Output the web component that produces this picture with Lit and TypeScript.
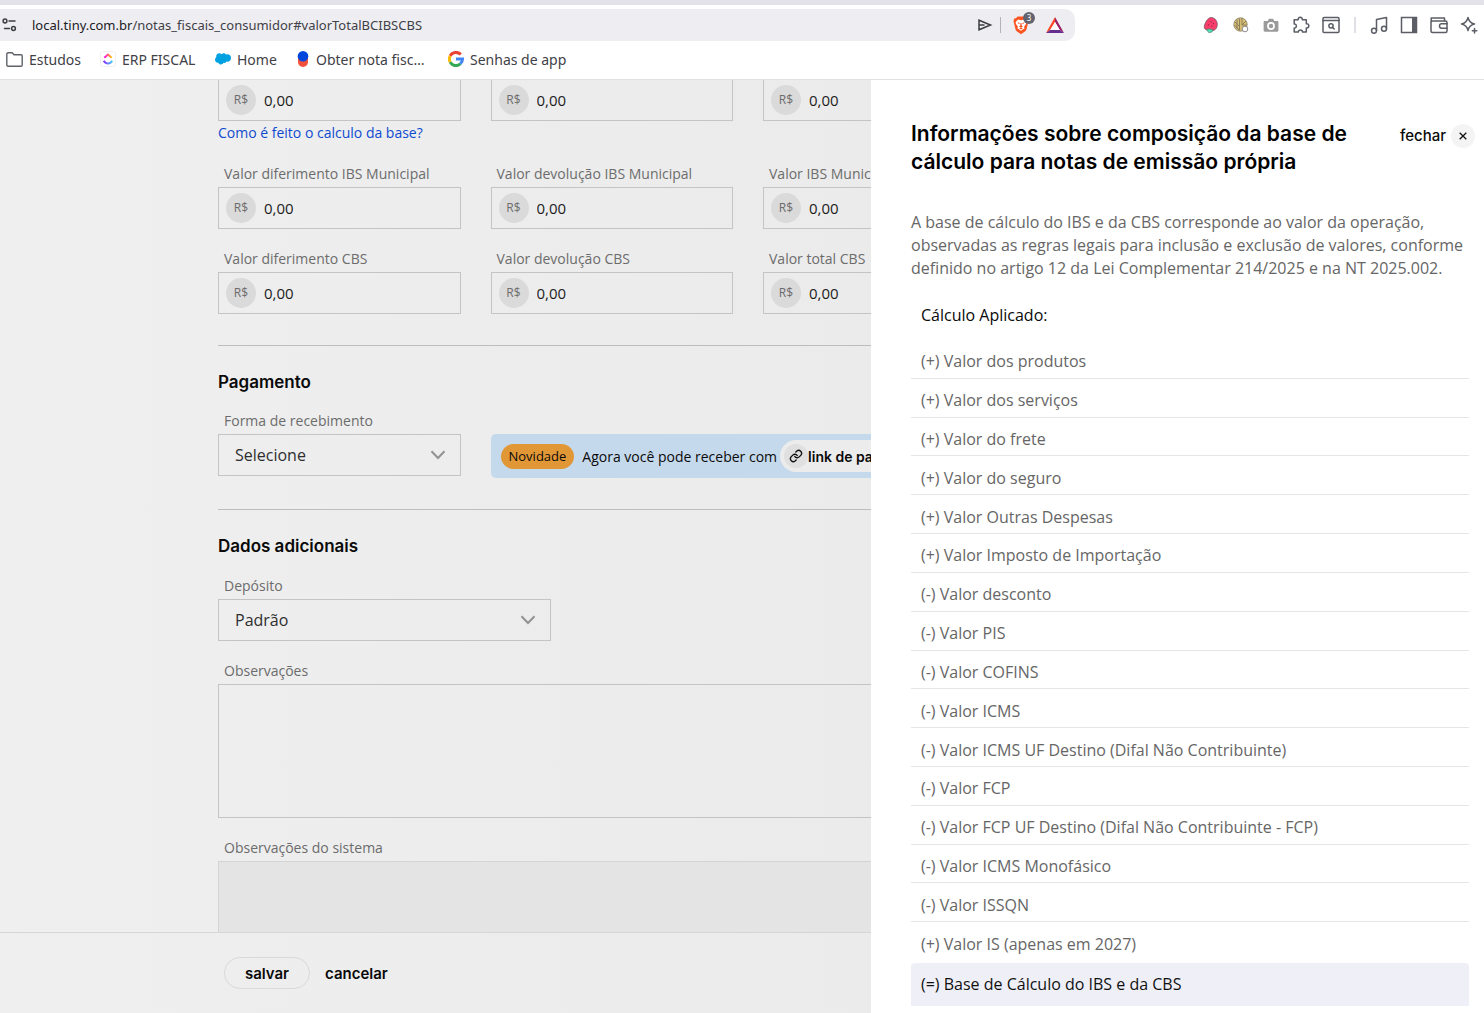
import { LitElement, html, css, svg, nothing, TemplateResult } from "lit";
import { customElement, property } from "lit/decorators.js";

const reset = css`
  *, *::before, *::after { box-sizing: border-box; }
  h1, h2, h3, p, ul { margin: 0; padding: 0; }
  ul { list-style: none; }
  button, input, select, textarea { font: inherit; color: inherit; margin: 0; }
  button { border: 0; background: none; padding: 0; cursor: pointer; }
  a { color: inherit; text-decoration: none; }
  svg { display: block; flex: none; }
`;

/* ---------- icons ---------- */

const line = (size: number, body: TemplateResult, cls = "") =>
  html`<svg class=${cls} width=${size} height=${size} viewBox="0 0 18 18" fill="none" stroke="#5b5e66" stroke-width="1.5" stroke-linejoin="round" stroke-linecap="round" aria-hidden="true">${body}</svg>`;

const icons = {
  tune: line(18, svg`<g stroke="#3d3f45"><circle cx="5" cy="5" r="1.900"/><path d="M9 5h6M4.500 12.500h5"/><circle cx="13.500" cy="12.500" r="1.900"/></g>`),
  send: line(18, svg`<path stroke="#3d3f45" stroke-linejoin="miter" d="M4 4.200v9.600L15.500 9zM4 9h5"/>`),
  brave: html`<svg width="18" height="20" viewBox="0 0 18 20" aria-hidden="true">
    <path fill="#fb5422" d="M5.500 1.500h7l1.500 1.700 1.800.2.700 2.800-.4 1.600-1.500 6.200c-.3 1.200-.8 1.900-1.700 2.600L9 19.300l-3.900-2.700c-.9-.7-1.400-1.400-1.700-2.600L1.900 7.800l-.4-1.600.7-2.800 1.800-.2z"/>
    <path fill="#fff" d="M6 4.500l3 .7 3-.7 2.500 2.700-.8 2.300-1.700 2.200.6 1.600L9 15.800l-3.600-2.500.6-1.600-1.700-2.200-.8-2.300z"/>
    <path fill="#fb5422" d="M5.300 7.300l2.500.6-.7 1.300zM12.700 7.300l-2.500.6.700 1.300zM8.500 8h1l.3 2.800 1.200.8-2 1-2-1 1.200-.8zM7.200 13.300L9 12.600l1.800.7L9 14.600z"/></svg>`,
  bat: html`<svg width="18" height="16" viewBox="0 0 18 16" aria-hidden="true">
    <path fill="#ff4724" d="M9 0v5L4.200 13 0 16z"/><path fill="#9e1f63" d="M9 0l9 16-4.200-3L9 5z"/><path fill="#662d91" d="M0 16l4.200-3h9.600l4.200 3z"/><path fill="#fff" d="M9 5l4.800 8H4.200z"/></svg>`,
  strawberry: html`<svg width="18" height="18" viewBox="0 0 18 18" aria-hidden="true">
    <path fill="#fb3d6c" stroke="#6b5560" stroke-width=".8" d="M9.500 1.500c3 .3 5.800 3 5.800 6.800 0 3.500-1.800 5.600-4 6.200l-6-.5c-2.300-.4-3.400-1.800-3-3.700C2.800 7.500 5.500 1.300 9.500 1.500z"/>
    <path fill="#4fe0b5" stroke="#4f7d72" stroke-width=".7" d="M4.500 13.500l2.800-.6 3.700.8-1 2.300-3.300.6z"/>
    <path stroke="#7c2642" stroke-width="1.200" stroke-linecap="round" d="M9 5.500v.2M11.500 7.500v.2M6.500 8.800v.2M10 10v.2"/></svg>`,
  cookie: html`<svg width="18" height="18" viewBox="0 0 18 18" aria-hidden="true">
    <circle cx="8.500" cy="8.500" r="6.700" fill="#d8be72" stroke="#8b836e" stroke-width=".8"/>
    <path fill="none" stroke="#85785a" stroke-width=".9" d="M3 6l5 5M2.500 9l4.500 5M5 3.500v9M7.500 2.500v12M10 2v7l4-4M10 9h5"/>
    <circle cx="13" cy="13" r="2.800" fill="#fff" stroke="#8d8d8d"/></svg>`,
  camera: html`<svg width="18" height="18" viewBox="0 0 18 18" aria-hidden="true">
    <path fill="#9b9b9b" d="M2.800 5h3l1-2.200h4.400l1 2.200h3c.7 0 1.200.5 1.200 1.200v8.300c0 .7-.5 1.200-1.200 1.200H2.800c-.7 0-1.200-.5-1.200-1.200V6.200C1.600 5.500 2.100 5 2.800 5z"/>
    <circle cx="9" cy="10" r="3.900" fill="#fff"/><circle cx="9" cy="10" r="2.200" fill="#9b9b9b"/></svg>`,
  puzzle: line(18, svg`<path d="M2.200 3.800h4c-.5-3.400 4.600-3.400 4.100 0h4v3.900c3.400-.4 3.400 4.600 0 4.200v4.200h-3.900c0-2.800-4-2.800-4 0H2.200v-4c2.900.2 2.900-4.300 0-4.100z"/>`),
  finder: line(18, svg`<rect x="1" y="1.500" width="16" height="15" rx="1"/><path d="M1 4.500h16" stroke-width="1.600"/><circle cx="9" cy="9.800" r="2.100"/><path d="M10.600 11.400l1.600 1.600"/>`),
  music: line(18, svg`<circle cx="4" cy="14.800" r="2.500"/><circle cx="14" cy="12.800" r="2.500"/><path d="M6.500 14.800V3.500l10-2v11.300"/>`),
  panel: line(18, svg`<rect x="1.500" y="1.500" width="15" height="15" stroke-linejoin="miter"/><path fill="#5b5e66" stroke="none" d="M12 1h5v16h-5z"/>`),
  wallet: line(18, svg`<rect x="1" y="5" width="16" height="11.500" rx="1.500"/><path d="M1.200 5.500V2h13.300v3M17 7.800h-5.500c-1.400 0-2 .9-2 2.200s.6 2.200 2 2.200H17"/>`),
  sparkle: line(18, svg`<path d="M8 1.500c.8 3.900 2.500 5.600 6.500 6.500-4 .9-5.700 2.600-6.500 6.500C7.200 10.600 5.500 8.900 1.500 8 5.500 7.100 7.200 5.400 8 1.500z"/><path d="M14.500 12.500v4.500M12.300 14.700h4.500"/>`),
  folder: html`<svg width="17" height="15" viewBox="0 0 17 15" fill="none" stroke="#5f6269" stroke-width="1.400" stroke-linejoin="round" aria-hidden="true"><path d="M.8 13V2c0-.7.500-1.200 1.200-1.200h4.200l1.800 2h7c.7 0 1.200.5 1.200 1.200v9c0 .7-.5 1.200-1.200 1.200H2c-.7 0-1.200-.5-1.200-1.200z"/></svg>`,
  clickup: html`<svg width="16" height="16" viewBox="0 0 16 16" aria-hidden="true">
    <defs><linearGradient id="cu-a"><stop stop-color="#ff02f0"/><stop offset="1" stop-color="#ffc800"/></linearGradient><linearGradient id="cu-b"><stop stop-color="#8930fd"/><stop offset="1" stop-color="#49ccf9"/></linearGradient></defs>
    <rect x=".5" y=".5" width="15" height="15" rx="2" fill="#fff" stroke="#f1f1f3"/>
    <path fill="none" stroke="url(#cu-a)" stroke-width="2" d="M4.300 6.800L8 3.600l3.700 3.200"/><path fill="none" stroke="url(#cu-b)" stroke-width="2" d="M3.800 9.800c2.200 3.600 6.200 3.600 8.400 0"/></svg>`,
  cloud: html`<svg width="16" height="12" viewBox="0 0 16 12" aria-hidden="true"><path fill="#00a1e0" d="M6.600 1.300C7.800-.1 10-.1 11 1.700c2.500-1.100 5 .7 5 3.300 0 2.400-2 4-4.300 3.600-.7 1.300-2 1.700-3.200 1.200-1 2.300-4.300 2.300-5.200-.1C1.400 10 0 8.500 0 6.800c0-1.100.5-2 1.300-2.600C.6 1.300 4-1 6.600 1.300z"/></svg>`,
  pin: html`<svg width="12" height="16" viewBox="0 0 12 16" aria-hidden="true"><rect x="1" y="1" width="10" height="15" rx="5" fill="#f4503c"/><circle cx="6" cy="5.300" r="5.300" fill="#0046dd"/></svg>`,
  google: html`<svg width="16" height="16" viewBox="0 0 16 16" aria-hidden="true">
    <g fill="none" stroke-width="3"><path stroke="#ea4335" d="M2.200 4.900A6.500 6.500 0 0 1 12.800 3.600"/><path stroke="#fbbc05" d="M2.200 11.100a6.500 6.500 0 0 1 0-6.200"/><path stroke="#34a853" d="M12.300 12.900a6.500 6.500 0 0 1-10.100-1.800"/><path stroke="#4285f4" d="M8 8h6.500a6.500 6.500 0 0 1-2.200 4.900"/></g></svg>`,
  chain: html`<svg width="14" height="14" viewBox="0 0 24 24" fill="none" stroke="#111" stroke-width="2.400" stroke-linecap="round" aria-hidden="true"><path d="M10 13a5 5 0 0 0 7.500.5l3-3a5 5 0 0 0-7-7l-1.800 1.700M14 11a5 5 0 0 0-7.500-.5l-3 3a5 5 0 0 0 7 7l1.700-1.700"/></svg>`,
  chevron: html`<svg class="chevron" width="16" height="10" viewBox="0 0 16 10" fill="none" stroke="#929292" stroke-width="2" aria-hidden="true"><path d="M1.500 1.200L8 8l6.500-6.800"/></svg>`,
  close: html`<svg width="8" height="8" viewBox="0 0 8 8" stroke="#111" stroke-width="1.300" aria-hidden="true"><path d="M.7.7l6.600 6.600M7.300.7L.7 7.300"/></svg>`,
};

/* ---------- browser bar ---------- */

@customElement("browser-bar")
export class BrowserBar extends LitElement {
  static styles = [reset, css`
    :host { display: block; flex: none; background: #fff; border-top: 5px solid #e3e2e8; border-bottom: 1px solid #e1e1e4; font-family: "Noto Sans", sans-serif; color: #3f4147; }
    .toolbar { display: flex; align-items: center; justify-content: space-between; padding: 4px 6px 0 0; }
    .address { flex: 0 1 1075px; display: flex; align-items: center; height: 32px; padding-right: 11px; border-radius: 0 10px 10px 0; background: #eeedf2; font-size: 13px; }
    .tune { margin-right: 14px; }
    .url { flex: 1; }
    .host { color: #202124; }
    .actions, .extensions { display: flex; align-items: center; }
    .rule { width: 1px; height: 16px; margin: 0 11px 0 7px; background: #b3b3ba; }
    .shield { position: relative; margin-right: 16px; }
    .count { position: absolute; left: 11px; top: -3px; width: 12px; height: 12px; border-radius: 6px; background: #62636e; color: #fff; font-size: 8px; line-height: 12px; text-align: center; }
    .extensions { gap: 12px; }
    .split { width: 2px; height: 16px; margin: 0 2px; background: #dfdfe6; }
    .bookmarks { display: grid; grid-template-columns: 94px 115px 80px 153px auto; justify-content: start; height: 38px; padding: 0 0 2px 6px; font-size: 14px; }
    .bookmark { display: flex; align-items: center; gap: 6px; white-space: nowrap; }
    .glyph { display: flex; justify-content: center; min-width: 15px; }
  `];

  render() {
    const tools = [
      ["Morango", icons.strawberry], ["Cookies", icons.cookie], ["Captura", icons.camera],
      ["Extensões", icons.puzzle], ["Buscar", icons.finder], ["", nothing],
      ["Mídia", icons.music], ["Painel lateral", icons.panel], ["Carteira", icons.wallet], ["Assistente", icons.sparkle],
    ] as [string, unknown][];
    const marks = [
      ["Estudos", icons.folder], ["ERP FISCAL", icons.clickup], ["Home", icons.cloud],
      ["Obter nota fisc…", icons.pin], ["Senhas de app", icons.google],
    ] as [string, unknown][];
    return html`
      <div class="toolbar">
        <div class="address">
          <button class="tune" aria-label="Informações do site">${icons.tune}</button>
          <div class="url"><span class="host">local.tiny.com.br</span>/notas_fiscais_consumidor#valorTotalBCIBSCBS</div>
          <div class="actions">
            <button aria-label="Compartilhar">${icons.send}</button>
            <span class="rule"></span>
            <button class="shield" aria-label="Escudos">${icons.brave}<span class="count">3</span></button>
            <button aria-label="Recompensas">${icons.bat}</button>
          </div>
        </div>
        <div class="extensions">
          ${tools.map(([name, icon]) => name ? html`<button aria-label=${name}>${icon}</button>` : html`<span class="split"></span>`)}
        </div>
      </div>
      <nav class="bookmarks">
        ${marks.map(([name, icon]) => html`<a class="bookmark" href="#"><span class="glyph">${icon}</span>${name}</a>`)}
      </nav>`;
  }
}

/* ---------- invoice form ---------- */

@customElement("money-field")
export class MoneyField extends LitElement {
  @property() label = "";
  @property() name = "";
  static styles = [reset, css`
    :host { display: block; min-width: 0; }
    .label { display: block; padding: 0 0 2px 6px; font-size: 14px; line-height: 23px; color: #6c6c6c; white-space: nowrap; }
    .box { display: flex; align-items: center; gap: 8px; height: 42px; padding: 0 7px; border: 1px solid #c4c4c4; }
    .unit { flex: none; width: 30px; height: 30px; border-radius: 15px; background: #dadada; color: #6c6c6c; font-size: 12px; line-height: 30px; text-align: center; }
    .value { flex: 1; width: 0; min-width: 0; padding: 0; border: 0; outline: 0; background: none; font-size: 15px; font-weight: 500; color: #1c1c1c; }
  `];
  render() {
    return html`
      ${this.label ? html`<label class="label" for="v">${this.label}</label>` : nothing}
      <div class="box"><span class="unit">R$</span><input id="v" class="value" aria-label=${this.label || this.name} .value=${"0,00"} /></div>`;
  }
}

@customElement("invoice-form")
export class InvoiceForm extends LitElement {
  static styles = [reset, css`
    :host { flex: 1; min-width: 0; display: flex; flex-direction: column; overflow: hidden; background: linear-gradient(90deg, #efefef, #ebebeb); color: #222; }
    .scroll { flex: 1; min-height: 0; overflow: hidden; }
    .content { width: 1278px; padding-left: 218px; margin-top: -1px; }
    .stack { display: flex; flex-direction: column; gap: 18px; padding-bottom: 31px; }
    .row4 { display: grid; grid-template-columns: repeat(4, minmax(0, 1fr)); column-gap: 30px; align-items: end; }
    .row3 { display: grid; grid-template-columns: repeat(3, minmax(0, 1fr)); column-gap: 30px; }
    .help { display: block; width: max-content; font-size: 14px; font-weight: 500; line-height: 24px; color: #0f4bd0; margin-bottom: 17px; }
    .section { border-top: 1px solid #bdbdbd; padding-top: 24px; }
    .title { font-family: Inter, sans-serif; font-size: 17px; font-weight: 600; line-height: 24px; color: #0a0a0a; }
    .payment { margin-top: 15px; padding-bottom: 31px; }
    .extra { margin-top: 16px; }
    .label { display: block; padding: 0 0 2px 6px; font-size: 14px; line-height: 23px; color: #6c6c6c; }
    .pick { position: relative; margin-bottom: 2px; }
    .extra .pick { margin-bottom: 0; }
    .select { display: block; width: 100%; height: 42px; padding: 0 40px 0 16px; border: 1px solid #c4c4c4; border-radius: 0; appearance: none; background: none; font-size: 16px; color: #2e2e2e; }
    .chevron { position: absolute; right: 15px; bottom: 16px; pointer-events: none; }
    .area { display: block; width: 100%; height: 134px; border: 1px solid #c4c4c4; border-radius: 0; background: none; resize: none; }
    .area:disabled { background: #e4e4e4; border-color: #d4d4d4; }
    .notice { grid-column: 2 / -1; display: flex; align-items: center; height: 44px; padding: 0 10px; border-radius: 5px; background: #c5d9ec; color: #0a0a0a; font-size: 14px; font-weight: 500; white-space: nowrap; }
    .tag { height: 25px; padding: 0 8px; margin-right: 8px; border-radius: 13px; background: #e29737; font-size: 13px; line-height: 24px; }
    .pay { display: flex; align-items: center; height: 32px; margin-left: 3px; padding: 0 14px 0 4px; border-radius: 16px; background: #ececec; font-family: Inter, sans-serif; font-size: 14px; font-weight: 600; }
    .disc { display: flex; align-items: center; justify-content: center; width: 24px; height: 24px; border-radius: 12px; background: #e0e0e0; }
    .footer { flex: none; display: flex; align-items: center; gap: 15px; height: 81px; padding-left: 224px; border-top: 1px solid #d6d6d6; font-family: Inter, sans-serif; font-size: 15px; font-weight: 600; color: #0a0a0a; }
    .save { width: 86px; height: 32px; border: 1px solid #d9d9d9; border-radius: 16px; }
  `];

  render() {
    const money = (label: string) => html`<money-field label=${label}></money-field>`;
    return html`
      <div class="scroll"><div class="content">
        <div class="row4">${[1, 2, 3].map((n) => html`<money-field name="Valor ${n}"></money-field>`)}</div>
        <a class="help" href="#valorTotalBCIBSCBS">Como é feito o calculo da base?</a>
        <div class="stack">
          <div class="row4">${["Valor diferimento IBS Municipal", "Valor devolução IBS Municipal", "Valor IBS Municipal"].map(money)}</div>
          <div class="row4">${["Valor diferimento CBS", "Valor devolução CBS", "Valor total CBS"].map(money)}</div>
        </div>
        <section class="section">
          <h2 class="title">Pagamento</h2>
          <div class="row4 payment">
            <div class="pick">
              <label class="label" for="forma">Forma de recebimento</label>
              <select class="select" id="forma"><option>Selecione</option></select>${icons.chevron}
            </div>
            <div class="notice">
              <span class="tag">Novidade</span>Agora você pode receber com
              <a class="pay" href="#pagamento"><span class="disc">${icons.chain}</span>link de pagamento</a>
            </div>
          </div>
        </section>
        <section class="section">
          <h2 class="title">Dados adicionais</h2>
          <div class="stack extra">
            <div class="row3">
              <div class="pick">
                <label class="label" for="deposito">Depósito</label>
                <select class="select" id="deposito"><option>Padrão</option></select>${icons.chevron}
              </div>
            </div>
            <div><label class="label" for="obs">Observações</label><textarea class="area" id="obs"></textarea></div>
            <div><label class="label" for="sis">Observações do sistema</label><textarea class="area" id="sis" disabled></textarea></div>
          </div>
        </section>
      </div></div>
      <footer class="footer"><button class="save">salvar</button><button>cancelar</button></footer>`;
  }
}

/* ---------- side panel ---------- */

@customElement("calc-panel")
export class CalcPanel extends LitElement {
  static styles = [reset, css`
    :host { flex: 0 0 613px; display: flex; flex-direction: column; padding: 40px 15px 7px 40px; background: #fff; color: #666; font-size: 16px; }
    .head { display: flex; justify-content: space-between; align-items: flex-start; margin: 0 -6px 35px 0; }
    .title { max-width: 470px; font-family: Inter, sans-serif; font-size: 21px; font-weight: 600; line-height: 28px; color: #000; }
    .close { display: flex; align-items: center; gap: 5px; margin-top: 4px; font-family: Inter, sans-serif; font-size: 15px; font-weight: 500; line-height: 24px; color: #0a0a0a; }
    .disc { display: flex; align-items: center; justify-content: center; width: 24px; height: 24px; border-radius: 12px; background: #f4f4f4; }
    .intro { line-height: 23px; margin-bottom: 23px; }
    .sub { padding-left: 10px; margin-bottom: 13px; font-size: 16px; font-weight: 500; line-height: 24px; color: #0a0a0a; }
    .list { flex: 1; display: grid; grid-auto-rows: 1fr; margin-bottom: 2px; line-height: 24px; }
    .item { display: flex; align-items: center; padding: 5px 10px 0; border-bottom: 1px solid #e6e6e6; }
    .item:last-child { border-bottom: 0; }
    .total { flex: none; padding: 9px 10px 10px; border-radius: 4px 4px 0 0; background: #efeff8; line-height: 24px; color: #111; }
  `];

  render() {
    const items = [
      "(+) Valor dos produtos", "(+) Valor dos serviços", "(+) Valor do frete", "(+) Valor do seguro",
      "(+) Valor Outras Despesas", "(+) Valor Imposto de Importação", "(-) Valor desconto", "(-) Valor PIS",
      "(-) Valor COFINS", "(-) Valor ICMS", "(-) Valor ICMS UF Destino (Difal Não Contribuinte)", "(-) Valor FCP",
      "(-) Valor FCP UF Destino (Difal Não Contribuinte - FCP)", "(-) Valor ICMS Monofásico", "(-) Valor ISSQN",
      "(+) Valor IS (apenas em 2027)",
    ];
    return html`
      <header class="head">
        <h1 class="title">Informações sobre composição da base de cálculo para notas de emissão própria</h1>
        <button class="close">fechar<span class="disc">${icons.close}</span></button>
      </header>
      <p class="intro">A base de cálculo do IBS e da CBS corresponde ao valor da operação, observadas as regras legais para inclusão e exclusão de valores, conforme definido no artigo 12 da Lei Complementar 214/2025 e na NT 2025.002.</p>
      <h3 class="sub">Cálculo Aplicado:</h3>
      <ul class="list">${items.map((t) => html`<li class="item">${t}</li>`)}</ul>
      <p class="total">(=) Base de Cálculo do IBS e da CBS</p>`;
  }
}

@customElement("app-root")
export class AppRoot extends LitElement {
  static styles = [reset, css`
    :host { display: flex; flex-direction: column; height: 100vh; overflow: hidden; font-family: "Open Sans", sans-serif; font-size: 16px; }
    .page { flex: 1; min-height: 0; display: flex; }
  `];
  render() {
    return html`<browser-bar></browser-bar><div class="page"><invoice-form></invoice-form><calc-panel></calc-panel></div>`;
  }
}
